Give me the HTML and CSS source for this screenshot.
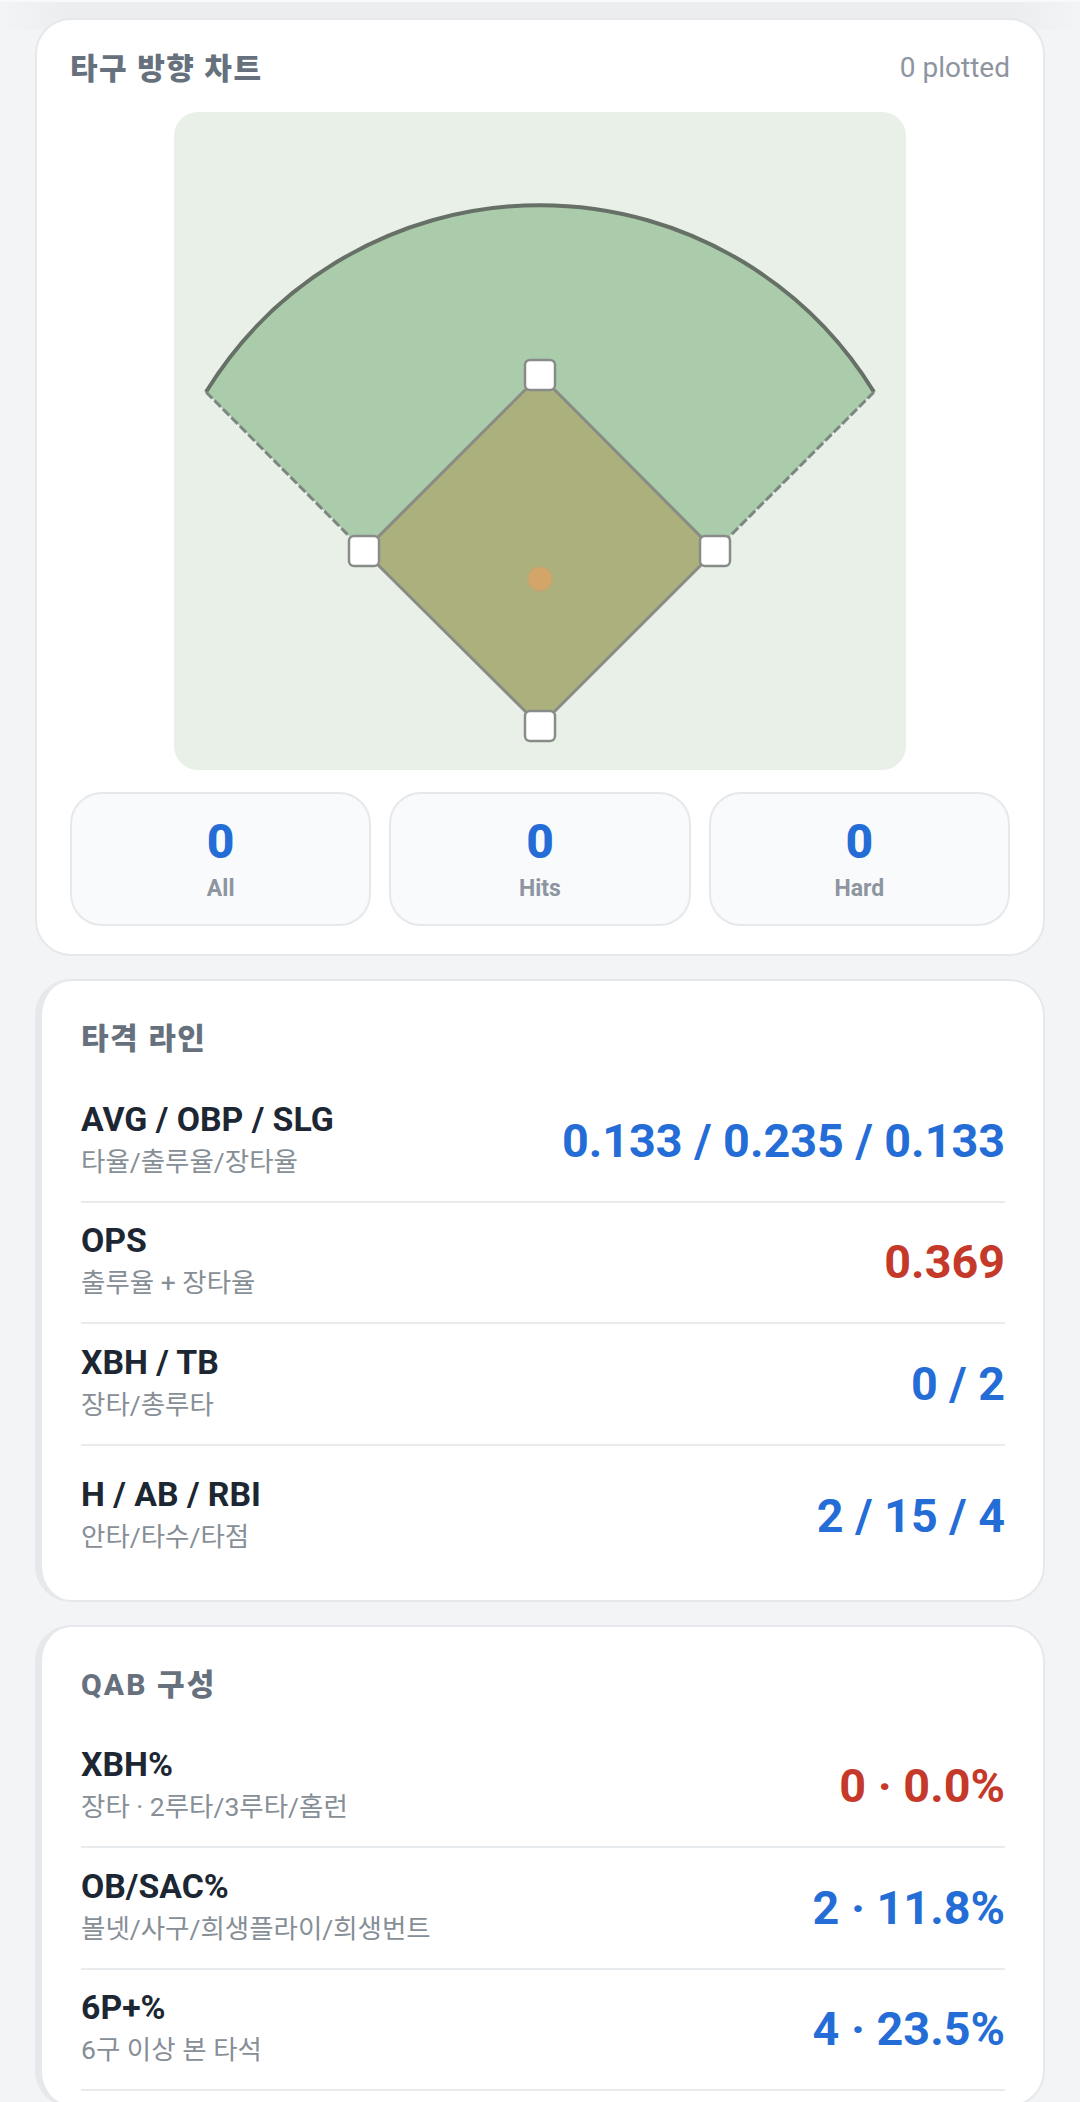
FILE: index.html
```html
<!DOCTYPE html>
<html lang="ko">
<head>
	<meta charset="UTF-8">
	<title>타구 방향 차트</title>
	<link rel="stylesheet" href="styles.css">
</head>
<body>
	<div class="topbar"></div>
	<div class="page">
		<section class="card chart-card">
			<div class="chart-head">
				<h2 class="chart-title">타구 방향 차트</h2>
				<span class="plotted">0 plotted</span>
			</div>
			<div class="field">
				<svg class="field-svg" viewBox="174 112 732 658" width="732" height="658">
					<path class="outfield" d="M206 392 A392 392 0 0 1 874 392 L715 551 L540 375 L364 551 Z"/>
					<path class="arc" d="M206 392 A392 392 0 0 1 874 392"/>
					<path class="foul" d="M206 392 L364 551"/>
					<path class="foul" d="M874 392 L715 551"/>
					<path class="infield" d="M540 375 L715 551 L540 726 L364 551 Z"/>
					<circle class="mound" cx="540" cy="579" r="12"/>
					<rect class="base" x="525" y="360" width="30" height="30" rx="5"/>
					<rect class="base" x="700" y="536" width="30" height="30" rx="5"/>
					<rect class="base" x="349" y="536" width="30" height="30" rx="5"/>
					<rect class="base" x="525" y="711" width="30" height="30" rx="5"/>
				</svg>
			</div>
			<div class="tiles">
				<div class="tile"><b class="tile-num">0</b><span class="tile-label">All</span></div>
				<div class="tile"><b class="tile-num">0</b><span class="tile-label">Hits</span></div>
				<div class="tile"><b class="tile-num">0</b><span class="tile-label">Hard</span></div>
			</div>
		</section>

		<section class="card stat-card">
			<h3 class="stat-title">타격 라인</h3>
			<div class="row">
				<div class="info"><div class="name">AVG / OBP / SLG</div><div class="sub">타율/출루율/장타율</div></div>
				<div class="val">0.133 / 0.235 / 0.133</div>
			</div>
			<div class="row">
				<div class="info"><div class="name">OPS</div><div class="sub">출루율 + 장타율</div></div>
				<div class="val red">0.369</div>
			</div>
			<div class="row">
				<div class="info"><div class="name">XBH / TB</div><div class="sub">장타/총루타</div></div>
				<div class="val">0 / 2</div>
			</div>
			<div class="row row-last">
				<div class="info"><div class="name">H / AB / RBI</div><div class="sub">안타/타수/타점</div></div>
				<div class="val">2 / 15 / 4</div>
			</div>
		</section>

		<section class="card stat-card">
			<h3 class="stat-title title-wide">QAB 구성</h3>
			<div class="row">
				<div class="info"><div class="name">XBH%</div><div class="sub">장타 · 2루타/3루타/홈런</div></div>
				<div class="val red">0 · 0.0%</div>
			</div>
			<div class="row">
				<div class="info"><div class="name">OB/SAC%</div><div class="sub">볼넷/사구/희생플라이/희생번트</div></div>
				<div class="val">2 · 11.8%</div>
			</div>
			<div class="row">
				<div class="info"><div class="name">6P+%</div><div class="sub">6구 이상 본 타석</div></div>
				<div class="val">4 · 23.5%</div>
			</div>
		</section>
	</div>
</body>
</html>
```

FILE: styles.css
```css
* { margin: 0; padding: 0; box-sizing: border-box; }
html, body { height: 2102px; overflow: hidden; }
body { background: #f2f4f6; font-family: Roboto, "Noto Sans CJK KR", sans-serif; color: #1c2733; }

.topbar { height: 30px; margin-bottom: -30px; background: linear-gradient(to right, #f2f4f6, #ebedef 70px, #ebedef 1010px, #f2f4f6); border-top: 2px solid #f8f9fa; }
.page { position: relative; padding: 18px 35px 0; display: flex; flex-direction: column; gap: 23px; }

.card { background: #fff; border: 2px solid #e6e8eb; border-radius: 36px; }

.chart-card { height: 938px; padding: 25px 33px 0; }
.chart-head { display: flex; justify-content: space-between; align-items: center; height: 44px; margin-bottom: 23px; }
.chart-title { font-size: 30px; font-weight: 800; color: #67717e; letter-spacing: 1.5px; margin-bottom: 2px; }
.plotted { font-size: 28px; color: #8d959e; }

.field { width: 732px; height: 658px; margin: 0 auto; background: #e8f0e7; border-radius: 24px; overflow: hidden; }
.field-svg { display: block; }
.outfield { fill: #abccab; }
.arc { fill: none; stroke: #667066; stroke-width: 4; }
.foul { fill: none; stroke: #7b8880; stroke-width: 3; stroke-dasharray: 9 3; }
.infield { fill: #abb07d; stroke: #888c84; stroke-width: 3; }
.mound { fill: #d4a568; stroke: #bfa673; stroke-width: 1.5; }
.base { fill: #fff; stroke: #888c88; stroke-width: 2.5; }

.tiles { display: grid; grid-template-columns: repeat(3, 1fr); gap: 18px; margin-top: 22px; }
.tile { height: 134px; background: #f9fafb; border: 2px solid #e6e8eb; border-radius: 32px; display: flex; flex-direction: column; align-items: center; padding-top: 20px; }
.tile-num { font-size: 48px; line-height: 56px; font-weight: 800; color: #256dd6; }
.tile-label { font-size: 23px; line-height: 28px; margin-top: 5px; font-weight: 700; color: #8d95a0; }

.stat-card { border-left-width: 7px; padding: 0 38px 14px 39px; }
.stat-title { font-size: 30px; line-height: 40px; font-weight: 800; color: #67717e; letter-spacing: 1.5px; padding-top: 38px; height: 100px; }
.title-wide { letter-spacing: 2.1px; }

.row { height: 121.5px; display: flex; justify-content: space-between; align-items: center; border-bottom: 2px solid #e9ecef; }
.row-last { height: 140px; border-bottom: 0; }
.name { font-size: 33.8px; line-height: 42px; font-weight: 700; color: #1c2733; }
.sub { font-size: 26.5px; line-height: 42px; color: #868e96; }
.val { font-size: 46.7px; font-weight: 700; color: #256dd6; }
.red { color: #c5392b; }
```
